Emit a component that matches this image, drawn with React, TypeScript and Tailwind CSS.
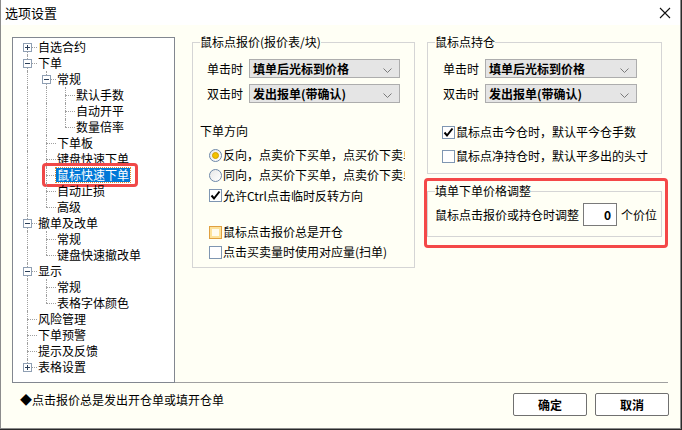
import React from 'react';

type Node = { t: string; l: number; b?: '+' | '-'; sel?: boolean };

const tree: Node[] = [
  { t: '自选合约', l: 0, b: '+' },
  { t: '下单', l: 0, b: '-' },
  { t: '常规', l: 1, b: '-' },
  { t: '默认手数', l: 2 },
  { t: '自动开平', l: 2 },
  { t: '数量倍率', l: 2 },
  { t: '下单板', l: 1 },
  { t: '键盘快速下单', l: 1 },
  { t: '鼠标快速下单', l: 1, sel: true },
  { t: '自动止损', l: 1 },
  { t: '高级', l: 1 },
  { t: '撤单及改单', l: 0, b: '-' },
  { t: '常规', l: 1 },
  { t: '键盘快速撤改单', l: 1 },
  { t: '显示', l: 0, b: '-' },
  { t: '常规', l: 1 },
  { t: '表格字体颜色', l: 1 },
  { t: '风险管理', l: 0 },
  { t: '下单预警', l: 0 },
  { t: '提示及反馈', l: 0 },
  { t: '表格设置', l: 0, b: '+' },
];

// does the branch at level a carry on below row i?
function continues(i: number, a: number) {
  for (let j = i + 1; j < tree.length; j++) {
    if (tree[j].l < a) return false;
    if (tree[j].l === a) return true;
  }
  return false;
}

const font = { fontFamily: '"Noto Sans CJK SC", "Liberation Sans", sans-serif' };

function TreeRow({ node, i }: { node: Node; i: number }) {
  const cx = (lv: number) => 14 + 19 * lv;
  const ancestors = [];
  for (let a = 0; a < node.l; a++) {
    if (continues(i, a)) {
      ancestors.push(
        <span
          key={a}
          className="absolute top-0 h-4 border-l border-dotted border-[#a0a0a0]"
          style={{ left: cx(a) }}
        />
      );
    }
  }
  const x = cx(node.l);
  return (
    <div className="relative h-4 flex items-center">
      {ancestors}
      {!(i === 0 && node.l === 0) && (
        <span className="absolute top-0 h-2 border-l border-dotted border-[#a0a0a0]" style={{ left: x }} />
      )}
      {continues(i, node.l) && (
        <span className="absolute top-2 h-2 border-l border-dotted border-[#a0a0a0]" style={{ left: x }} />
      )}
      <span className="absolute top-2 w-[10px] border-t border-dotted border-[#a0a0a0]" style={{ left: x }} />
      {node.b && (
        <span
          className="absolute top-[4px] w-[9px] h-[9px] border border-[#8f9fb3] bg-white flex items-center justify-center"
          style={{ left: x - 4 }}
        >
          <span className="absolute w-[5px] h-px bg-[#2b3f5a]" />
          {node.b === '+' && <span className="absolute w-px h-[5px] bg-[#2b3f5a]" />}
        </span>
      )}
      <span
        className={
          'absolute text-[12px] leading-[14px] whitespace-nowrap ' +
          (node.sel ? 'bg-[#0078d7] text-white outline-1 outline-dotted outline-[#e08a2c] px-[1px] -ml-[1px]' : 'text-black')
        }
        style={{ left: 25 + 19 * node.l }}
      >
        {node.t}
        {node.sel && (
          <span className="absolute left-[-14px] right-[-8px] top-[-5px] bottom-[-5px] border-[3px] border-[#f04848] rounded-[4px]" />
        )}
      </span>
    </div>
  );
}

function Chevron() {
  return (
    <svg width="9" height="5" viewBox="0 0 9 5" className="absolute right-[7px] top-[8px]">
      <path d="M0.5 0.5 L4.5 4.5 L8.5 0.5" fill="none" stroke="#7a7a7a" strokeWidth="1" />
    </svg>
  );
}

function Select({ label, value, w }: { label: string; value: string; w: number }) {
  return (
    <div className="flex items-center h-[19px]">
      <span className="text-[12px] w-[42px]">{label}</span>
      <div
        className="relative h-[19px] bg-[#e5e5e5] border border-[#adadad] flex items-center pl-[3px] text-[12px] font-bold"
        style={{ width: w }}
      >
        {value}
        <Chevron />
      </div>
    </div>
  );
}

function Check({ on, hover }: { on?: boolean; hover?: boolean }) {
  if (hover)
    return (
      <span className="w-[13px] h-[13px] border border-[#e0a040] bg-[#fde29a] flex items-center justify-center shrink-0">
        <span className="w-[7px] h-[7px] bg-[#fffbee]" />
      </span>
    );
  return (
    <span className="relative w-[13px] h-[13px] border border-[#7f96b2] bg-white shrink-0">
      {on && (
        <svg width="11" height="11" viewBox="0 0 11 11" className="absolute left-0 top-0">
          <path d="M1.5 5.5 L4 8.5 L9.5 1.5" fill="none" stroke="#000" strokeWidth="2" />
        </svg>
      )}
    </span>
  );
}

function Radio({ on }: { on?: boolean }) {
  return (
    <span className="w-[13px] h-[13px] rounded-full border border-[#6d87a8] bg-gradient-to-br from-[#e8e8e8] to-white flex items-center justify-center shrink-0">
      {on && <span className="w-[7px] h-[7px] rounded-full bg-[#f2c200] border border-[#d6a000]" />}
    </span>
  );
}

export default function App() {
  return (
    <div className="w-[682px] h-[430px] bg-[#2a2a2a] text-black" style={font}>
      <div className="w-[681px] h-[429px] bg-[#fffff5] border-l border-r border-b border-[#8c8c8c] flex flex-col">
        {/* title bar */}
        <div className="h-[25px] bg-white flex items-center justify-between pl-[4px] pr-[8px] shrink-0">
          <span className="text-[13px]">选项设置</span>
          <svg width="12" height="12" viewBox="0 0 12 12" className="mr-[1px]">
            <path d="M1 1 L11 11 M11 1 L1 11" stroke="#111" strokeWidth="1.1" />
          </svg>
        </div>

        <div className="flex pl-[11px] pt-[12px]">
          {/* tree */}
          <div className="w-[163px] h-[346px] bg-white border border-[#828790] pt-[1px] shrink-0">
            {tree.map((n, i) => (
              <TreeRow key={i} node={n} i={i} />
            ))}
          </div>

          {/* settings */}
          <div className="w-[493px] h-[346px] border-b border-[#a0a0a0] flex pl-[17px] gap-[9px]">
            <fieldset className="w-[223px] h-[234px] border border-[#d5d5d5] px-[7px] -mt-[3px]">
              <legend className="text-[12px] leading-[16px] px-0">鼠标点报价(报价表/块)</legend>
              <div className="pl-[7px] pt-[9px] flex flex-col gap-[6px]">
                <Select label="单击时" value="填单后光标到价格" w={151} />
                <Select label="双击时" value="发出报单(带确认)" w={151} />
              </div>
              <div className="text-[12px] leading-[16px] mt-[20px]">下单方向</div>
              <div className="pl-[9px] mt-[6px] flex flex-col text-[12px] w-[205px] overflow-hidden">
                <div className="h-[20px] flex items-center gap-[1px] whitespace-nowrap">
                  <Radio on />
                  反向，点卖价下买单，点买价下卖单
                </div>
                <div className="h-[20px] flex items-center gap-[1px] whitespace-nowrap">
                  <Radio />
                  同向，点买价下买单，点卖价下卖单
                </div>
                <div className="h-[21px] flex items-center gap-[1px] whitespace-nowrap">
                  <Check on />
                  允许Ctrl点击临时反转方向
                </div>
                <div className="h-[20px] mt-[16px] flex items-center gap-[1px] whitespace-nowrap">
                  <Check hover />
                  鼠标点击报价总是开仓
                </div>
                <div className="h-[20px] flex items-center gap-[1px] whitespace-nowrap">
                  <Check />
                  点击买卖量时使用对应量(扫单)
                </div>
              </div>
            </fieldset>

            <div className="w-[243px] flex flex-col -mt-[3px]">
              <fieldset className="ml-[3px] w-[235px] h-[140px] border border-[#d5d5d5] px-[7px]">
                <legend className="text-[12px] leading-[16px] px-0">鼠标点持仓</legend>
                <div className="pl-[8px] pt-[9px] flex flex-col gap-[6px]">
                  <Select label="单击时" value="填单后光标到价格" w={152} />
                  <Select label="双击时" value="发出报单(带确认)" w={152} />
                </div>
                <div className="pl-[7px] mt-[19px] flex flex-col text-[12px]">
                  <div className="h-[20px] flex items-center gap-[1px] whitespace-nowrap">
                    <Check on />
                    鼠标点击今仓时，默认平今仓手数
                  </div>
                  <div className="h-[20px] mt-[4px] flex items-center gap-[1px] whitespace-nowrap">
                    <Check />
                    鼠标点净持仓时，默认平多出的头寸
                  </div>
                </div>
              </fieldset>

              <div className="mt-[4px] w-[244px] h-[70px] border-[3px] border-[#f44848] rounded-[4px] pt-[2px]">
                <fieldset className="w-[235px] h-[54px] border border-[#d5d5d5] pl-[7px] pr-0">
                  <legend className="text-[12px] leading-[16px] px-0">填单下单价格调整</legend>
                  <div className="flex items-center text-[12px] pt-[4px] whitespace-nowrap">
                    <span>鼠标点击报价或持仓时调整</span>
                    <span className="ml-[4px] w-[34px] h-[23px] border border-[#7a7a7a] bg-white flex items-center justify-end pr-[5px] font-bold shrink-0">
                      0
                    </span>
                    <span className="ml-[4px]">个价位</span>
                  </div>
                </fieldset>
              </div>
            </div>
          </div>
        </div>

        {/* footer */}
        <div className="flex items-center pl-[19px] pr-[11px] mt-[8px]">
          <span className="text-[12px] -mt-[8px]">◆点击报价总是发出开仓单或填开仓单</span>
          <div className="ml-auto flex gap-[8px] mt-[2px]">
            <button className="w-[74px] h-[23px] border border-[#707070] rounded-[2px] bg-white text-[12px] font-bold">
              确定
            </button>
            <button className="w-[74px] h-[23px] border border-[#707070] rounded-[2px] bg-white text-[12px] font-bold">
              取消
            </button>
          </div>
        </div>
      </div>
    </div>
  );
}
